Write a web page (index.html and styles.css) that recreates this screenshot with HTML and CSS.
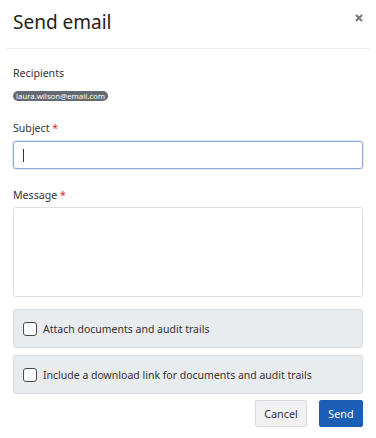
FILE: index.html
```html
<!DOCTYPE html>
<html>
<head>
<meta charset="utf-8">
<link rel="stylesheet" href="styles.css">
</head>
<body>
<div class="modal">
  <div class="header">
    <h1 class="title">Send email</h1>
    <svg class="close" width="8" height="8" viewBox="0 0 8 8"><path d="M1 1L7 7M7 1L1 7" stroke="#777" stroke-width="2" stroke-linecap="butt"/></svg>
  </div>
  <div class="content">
    <div class="label recipients-label">Recipients</div>
    <div class="badges"><span class="badge">laura.wilson@email.com</span></div>
    <div class="label subject-label">Subject <span class="req">*</span></div>
    <div class="input"><span class="caret"></span></div>
    <div class="label message-label">Message <span class="req">*</span></div>
    <div class="textarea"></div>
    <div class="panels">
      <label class="panel"><span class="check"></span><span>Attach documents and audit trails</span></label>
      <label class="panel"><span class="check"></span><span>Include a download link for documents and audit trails</span></label>
    </div>
    <div class="actions">
      <button class="btn cancel">Cancel</button>
      <button class="btn send">Send</button>
    </div>
  </div>
</div>
</body>
</html>
```
FILE: styles.css
```css
html, body {
  margin: 0;
  padding: 0;
  background: #fff;
}
body {
  font-family: "Noto Sans", "Open Sans", sans-serif;
  color: #333;
  width: 376px;
}
.modal {
  padding: 0 6px;
}
.header {
  box-sizing: border-box;
  border-bottom: 1px solid #ececec;
  display: flex;
  justify-content: space-between;
  align-items: flex-start;
  padding: 10px 7px 0 7px;
  height: 49px;
}
.title {
  margin: 0;
  font-size: 19px;
  line-height: 24px;
  font-weight: 400;
  color: #222;
}
.close {
  display: block;
  margin-top: 4px;
}
.content {
  padding: 0 7px;
  display: flex;
  flex-direction: column;
}
.label {
  font-size: 10.6px;
  line-height: 16px;
  color: #333;
}
.req {
  color: #e0262b;
}
.recipients-label {
  margin-top: 16px;
}
.badges {
  display: flex;
  margin-top: 10px;
}
.badge {
  background: #636a71;
  color: #fff;
  font-size: 7.8px;
  line-height: 10px;
  height: 10px;
  padding: 0 3px;
  border-radius: 5px;
}
.subject-label {
  margin-top: 19px;
}
.input {
  margin-top: 5px;
  height: 28px;
  box-sizing: border-box;
  border: 1px solid #8cadde;
  border-radius: 3px;
  box-shadow: 0 0 0 0.5px #b9cdec;
  display: flex;
  align-items: center;
  padding-left: 9px;
}
.caret {
  width: 1px;
  height: 13px;
  background: #333;
}
.message-label {
  margin-top: 18px;
}
.textarea {
  margin-top: 4px;
  height: 90px;
  box-sizing: border-box;
  border: 1px solid #dde1e5;
  border-radius: 3px;
}
.panels {
  margin-top: 12px;
  display: flex;
  flex-direction: column;
  gap: 7px;
}
.panel {
  height: 39px;
  box-sizing: border-box;
  background: #e9ecef;
  border: 1px solid #d9dcdf;
  border-radius: 3px;
  display: flex;
  align-items: center;
  padding-left: 9px;
  gap: 6px;
  font-size: 10.5px;
  color: #333;
}
.check {
  width: 14px;
  height: 14px;
  box-sizing: border-box;
  border: 1.5px solid #4a4a4a;
  border-radius: 3px;
  background: #fff;
  flex: none;
}
.actions {
  margin-top: 6px;
  display: flex;
  justify-content: flex-end;
  gap: 12px;
}
.btn {
  font-family: "Noto Sans", "Open Sans", sans-serif;
  font-size: 10.8px;
  height: 27px;
  box-sizing: border-box;
  border-radius: 2px;
  padding: 0;
  cursor: pointer;
}
.cancel {
  width: 52px;
  background: #f1f1f4;
  border: 1px solid #d9d9de;
  color: #333;
}
.send {
  width: 44px;
  background: #1b5eb5;
  border: 1px solid #1b5eb5;
  color: #fff;
}
```
